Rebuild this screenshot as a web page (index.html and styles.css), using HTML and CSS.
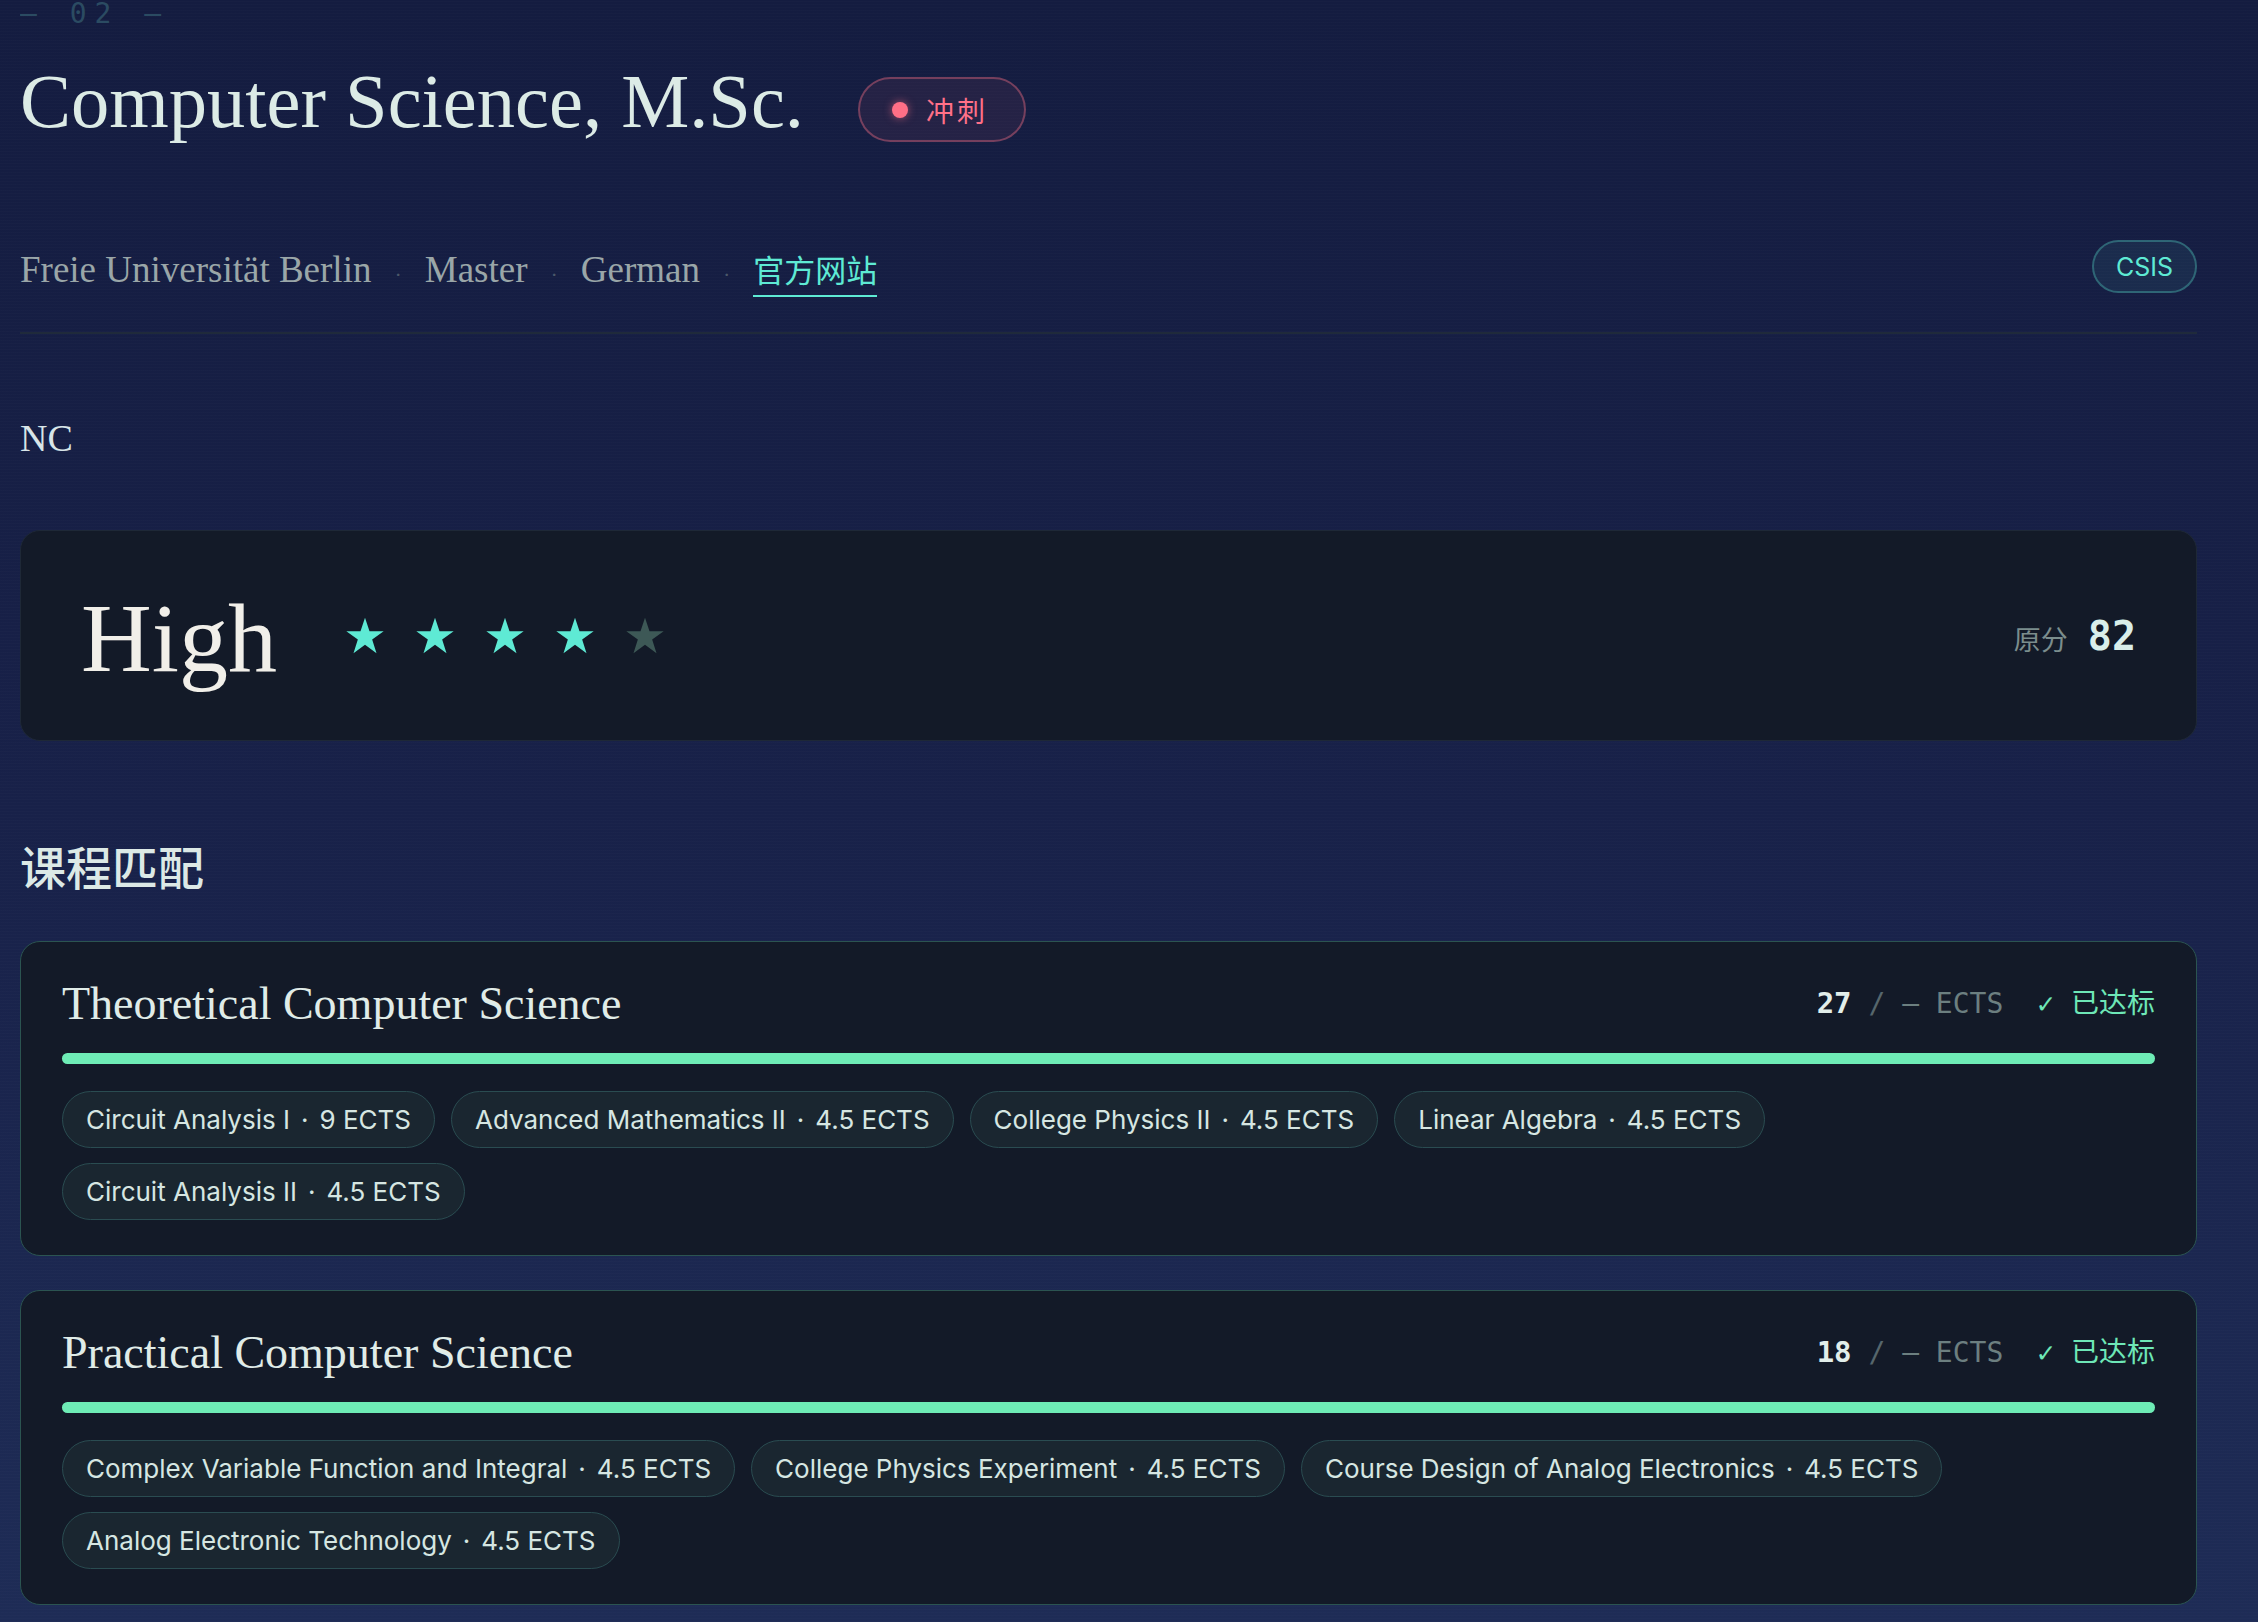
FILE: index.html
```html
<!DOCTYPE html>
<html>
<head>
  <meta charset="utf-8">
  <link rel="stylesheet" href="styles.css">
</head>
<body>
  <main class="page">
    <div class="index">— 02 —</div>

    <header class="head">
      <div class="title-row">
        <h1 class="title">Computer Science, M.Sc.</h1>
        <span class="badge-reach"><i class="reach-dot"></i>冲刺</span>
      </div>
      <div class="meta-row">
        <div class="meta">
          <span>Freie Universität Berlin</span>
          <span class="sep">·</span>
          <span>Master</span>
          <span class="sep">·</span>
          <span>German</span>
          <span class="sep">·</span>
          <a class="site" href="#">官方网站</a>
        </div>
        <span class="csis">CSIS</span>
      </div>
    </header>

    <section class="nc">
      <h2 class="nc-label">NC</h2>
      <div class="nc-card">
        <div class="nc-left">
          <span class="nc-level">High</span>
          <div class="stars">
            <svg class="star on" viewBox="0 0 24 24"><polygon points="12,1 14.7,9.1 23.2,9.1 16.3,14.1 18.9,22.4 12,17.3 5.1,22.4 7.7,14.1 0.8,9.1 9.3,9.1"/></svg>
            <svg class="star on" viewBox="0 0 24 24"><polygon points="12,1 14.7,9.1 23.2,9.1 16.3,14.1 18.9,22.4 12,17.3 5.1,22.4 7.7,14.1 0.8,9.1 9.3,9.1"/></svg>
            <svg class="star on" viewBox="0 0 24 24"><polygon points="12,1 14.7,9.1 23.2,9.1 16.3,14.1 18.9,22.4 12,17.3 5.1,22.4 7.7,14.1 0.8,9.1 9.3,9.1"/></svg>
            <svg class="star on" viewBox="0 0 24 24"><polygon points="12,1 14.7,9.1 23.2,9.1 16.3,14.1 18.9,22.4 12,17.3 5.1,22.4 7.7,14.1 0.8,9.1 9.3,9.1"/></svg>
            <svg class="star off" viewBox="0 0 24 24"><polygon points="12,1 14.7,9.1 23.2,9.1 16.3,14.1 18.9,22.4 12,17.3 5.1,22.4 7.7,14.1 0.8,9.1 9.3,9.1"/></svg>
          </div>
        </div>
        <div class="nc-score">
          <span class="score-label">原分</span>
          <span class="score-num">82</span>
        </div>
      </div>
    </section>

    <section class="courses">
      <h2 class="section-title">课程匹配</h2>

      <div class="module">
        <div class="module-head">
          <h3 class="module-title">Theoretical Computer Science</h3>
          <div class="module-stats"><b class="ects-num">27</b> <span class="slash">/</span> <span class="dash">—</span> ECTS<span class="met">✓ 已达标</span></div>
        </div>
        <div class="bar"><div class="bar-fill" style="width: 100%"></div></div>
        <div class="tags">
          <span class="tag">Circuit Analysis I<span class="sep-dot">·</span>9 ECTS</span>
          <span class="tag">Advanced Mathematics II<span class="sep-dot">·</span>4.5 ECTS</span>
          <span class="tag">College Physics II<span class="sep-dot">·</span>4.5 ECTS</span>
          <span class="tag">Linear Algebra<span class="sep-dot">·</span>4.5 ECTS</span>
          <span class="tag">Circuit Analysis II<span class="sep-dot">·</span>4.5 ECTS</span>
        </div>
      </div>

      <div class="module">
        <div class="module-head">
          <h3 class="module-title">Practical Computer Science</h3>
          <div class="module-stats"><b class="ects-num">18</b> <span class="slash">/</span> <span class="dash">—</span> ECTS<span class="met">✓ 已达标</span></div>
        </div>
        <div class="bar"><div class="bar-fill" style="width: 100%"></div></div>
        <div class="tags">
          <span class="tag">Complex Variable Function and Integral<span class="sep-dot">·</span>4.5 ECTS</span>
          <span class="tag">College Physics Experiment<span class="sep-dot">·</span>4.5 ECTS</span>
          <span class="tag">Course Design of Analog Electronics<span class="sep-dot">·</span>4.5 ECTS</span>
          <span class="tag">Analog Electronic Technology<span class="sep-dot">·</span>4.5 ECTS</span>
        </div>
      </div>
    </section>
  </main>
</body>
</html>
```

FILE: styles.css
```css
/* dark program detail page */
html,
body {
  margin: 0;
  min-height: 100%;
}

body {
  background-color: #171f47;
  background-image:
    repeating-linear-gradient(0deg, rgba(255, 255, 255, 0.012) 0 1px, transparent 1px 3px),
    linear-gradient(180deg, #141c40 0%, #182149 50%, #1e2c56 100%);
  font-family: "Liberation Serif", "Noto Sans CJK SC", serif;
  color: #dfeae8;
}

.page {
  width: 2177px;
  margin-left: 20px;
  overflow: hidden;
}

.index {
  margin-top: 0;
  font-family: "DejaVu Sans Mono", monospace;
  font-size: 28px;
  line-height: 27px;
  letter-spacing: 8px;
  color: #2b4b62;
}

/* header */
.head {
  padding-bottom: 39px;
  border-bottom: 2px solid #1f2a3b;
}

.title-row {
  display: flex;
  align-items: center;
  gap: 54px;
  margin-top: 29px;
}

.title {
  margin: 0;
  font-weight: normal;
  font-size: 76.5px;
  line-height: 91px;
  color: #dcebe6;
}

.badge-reach {
  display: flex;
  align-items: center;
  gap: 18px;
  height: 61px;
  margin-top: 16px;
  padding: 0 36px 0 32px;
  border: 2px solid rgba(251, 113, 133, 0.38);
  border-radius: 999px;
  background: rgba(251, 113, 133, 0.07);
  font-family: "Noto Sans CJK SC", sans-serif;
  font-size: 28px;
  letter-spacing: 3px;
  color: #ff7088;
}

.reach-dot {
  width: 16px;
  height: 16px;
  border-radius: 50%;
  background: #ff6f86;
  box-shadow: 0 0 8px rgba(255, 111, 134, 0.6);
}

.meta-row {
  display: flex;
  align-items: flex-end;
  justify-content: space-between;
  margin-top: 93px;
}

.meta {
  display: flex;
  align-items: baseline;
  margin-bottom: -5px;
  font-size: 37px;
  line-height: 46px;
  color: #9aa6a8;
}

.meta .sep {
  margin: 0 23px;
  font-size: 22px;
  color: #4b586a;
}

.site {
  font-size: 31px;
  color: #5eead4;
  text-decoration: none;
  border-bottom: 2px solid #5eead4;
}

.csis {
  display: flex;
  align-items: center;
  height: 49px;
  padding: 0 22px;
  border: 2px solid rgba(94, 234, 212, 0.3);
  border-radius: 999px;
  background: rgba(94, 234, 212, 0.07);
  font-family: Inter, "Liberation Sans", sans-serif;
  font-size: 25px;
  color: #5eead4;
}

/* NC block */
.nc-label {
  margin: 81px 0 0;
  font-weight: normal;
  font-size: 38px;
  line-height: 46px;
  color: #d8e5e8;
}

.nc-card {
  display: flex;
  align-items: center;
  justify-content: space-between;
  box-sizing: border-box;
  height: 211px;
  margin-top: 69px;
  padding: 0 60px;
  border: 1px solid #1e2837;
  border-radius: 20px;
  background: #131a28;
}

.nc-left {
  display: flex;
  align-items: center;
}

.nc-level {
  font-size: 98px;
  line-height: 1;
  padding-top: 4px;
  color: #f1efe9;
}

.stars {
  display: flex;
  gap: 30px;
  margin-left: 68px;
}

.star {
  width: 40px;
  height: 40px;
}

.star.on {
  fill: #5eead4;
}

.star.off {
  fill: #3d5856;
}

.nc-score {
  display: flex;
  align-items: baseline;
  gap: 20px;
}

.score-label {
  font-family: "Noto Sans CJK SC", sans-serif;
  font-size: 27px;
  color: #7b8d8d;
}

.score-num {
  font-family: "DejaVu Sans Mono", monospace;
  font-weight: bold;
  font-size: 40px;
  color: #d9eeea;
}

/* courses */
.section-title {
  margin: 97px 0 0;
  font-family: "Noto Sans CJK SC", sans-serif;
  font-weight: 500;
  font-size: 46px;
  line-height: 55px;
  color: #dce9e6;
}

.module {
  margin-top: 48px;
  padding: 35px 41px;
  border: 1px solid #2b5451;
  border-radius: 20px;
  background: #131a28;
}

.module + .module {
  margin-top: 34px;
}

.module-head {
  display: flex;
  align-items: center;
  justify-content: space-between;
}

.module-title {
  margin: 0;
  font-weight: normal;
  font-size: 46px;
  line-height: 54px;
  color: #e0ece8;
}

.module-stats {
  padding-bottom: 6px;
  font-family: "DejaVu Sans Mono", "Noto Sans CJK SC", monospace;
  font-size: 28px;
  color: #6c7f80;
  white-space: pre;
}

.ects-num {
  font-size: 29px;
  color: #e2eeea;
}

.slash {
  color: #56666c;
}

.met {
  margin-left: 34px;
  color: #6ee7b7;
}

.bar {
  height: 11px;
  margin-top: 22px;
  border-radius: 6px;
  background: #24313a;
}

.bar-fill {
  height: 100%;
  border-radius: 6px;
  background: #6eecb6;
}

.tags {
  display: flex;
  flex-wrap: wrap;
  gap: 15px 16px;
  margin-top: 27px;
}

.tag {
  display: inline-flex;
  align-items: center;
  box-sizing: border-box;
  height: 57px;
  padding: 0 23px;
  border: 1.5px solid #2a4c51;
  border-radius: 999px;
  background: #1a2630;
  font-family: Inter, "Liberation Sans", sans-serif;
  font-size: 26px;
  color: #d6e6e2;
}

.sep-dot {
  margin: 0 11px;
}
```
